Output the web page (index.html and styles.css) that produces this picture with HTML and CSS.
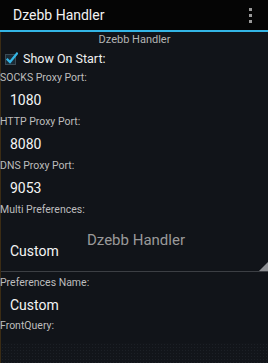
FILE: index.html
```html
<!DOCTYPE html>
<html>
<head>
<meta charset="utf-8">
<link rel="stylesheet" href="styles.css">
</head>
<body>
<div class="app">
  <header class="bar">
    <span class="title">Dzebb Handler</span>
    <span class="overflow"><i></i><i></i><i></i></span>
  </header>
  <div class="accent"></div>
  <main class="content">
    <div class="sub">Dzebb Handler</div>
    <label class="check">
      <svg class="box" width="13" height="13" viewBox="0 0 13 13">
        <rect x="0.5" y="2.5" width="10" height="10" fill="#1b2b36" stroke="#3a4a55"/>
        <path d="M2.5 7.5 L5 10 L12 1.5" fill="none" stroke="#33b5e5" stroke-width="2.2" stroke-linecap="square"/>
      </svg>
      <span>Show On Start:</span>
    </label>
    <div class="lbl">SOCKS Proxy Port:</div>
    <div class="val">1080</div>
    <div class="lbl">HTTP Proxy Port:</div>
    <div class="val">8080</div>
    <div class="lbl">DNS Proxy Port:</div>
    <div class="val">9053</div>
    <div class="lbl lbl-s">Multi Preferences:</div>
    <div class="spinner">
      <span class="spin-val">Custom</span>
      <span class="tri"></span>
    </div>
    <div class="lbl lbl-m">Preferences Name:</div>
    <div class="val val-m">Custom</div>
    <div class="lbl">FrontQuery:</div>
    <div class="gap"></div>
    <div class="dots"></div>
  </main>
  <div class="toast">Dzebb Handler</div>
</div>
</body>
</html>
```
FILE: styles.css
```css
* { box-sizing: border-box; }
html, body { margin: 0; padding: 0; }
body {
  width: 268px;
  height: 363px;
  overflow: hidden;
  background: #111419;
  font-family: Roboto, "Noto Sans", sans-serif;
  color: #fff;
}
.app { position: relative; height: 363px; display: flex; flex-direction: column; }
.bar {
  height: 30px;
  background: #050505;
  display: flex;
  align-items: center;
  justify-content: space-between;
  padding: 0 16px 0 13px;
}
.title { font-size: 14px; color: #f2f2f2; }
.overflow { display: flex; flex-direction: column; gap: 3px; }
.overflow i { display: block; width: 3px; height: 3px; background: #9a9a9a; }
.accent { height: 2px; background: #33b5e5; }
.content {
  flex: 1;
  display: flex;
  flex-direction: column;
  border-left: 1px solid #3b2c14;
}
.sub {
  height: 16px;
  line-height: 16px;
  text-align: center;
  font-size: 11px;
  color: #b4b4b4;
}
.check {
  height: 20px;
  display: flex;
  align-items: center;
  gap: 5px;
  padding-left: 4px;
  font-size: 12.5px;
  color: #f0f0f0;
}
.box { display: block; }
.lbl {
  height: 20px;
  line-height: 20px;
  font-size: 10.5px;
  color: #bdbdbd;
  margin-left: -1px;
}
.lbl-s { height: 19px; line-height: 19px; }
.lbl-m { height: 22px; line-height: 22px; }
.val {
  height: 24px;
  line-height: 24px;
  padding-left: 9px;
  font-size: 14px;
  color: #f4f4f4;
}
.val-m { height: 22px; line-height: 22px; }
.spinner {
  position: relative;
  height: 53px;
  display: flex;
  align-items: center;
  padding: 12px 0 0 9px;
  border-bottom: 1px solid #3c3f44;
  font-size: 14px;
  color: #f4f4f4;
}
.tri {
  position: absolute;
  right: 0;
  bottom: 0;
  width: 0; height: 0;
  border-left: 9px solid transparent;
  border-bottom: 9px solid #8d8f93;
}
.gap { height: 7px; }
.dots {
  flex: 1;
  background-color: #12151a;
  background-image: radial-gradient(circle, #1c2026 0.8px, transparent 1px);
  background-size: 3px 3px;
}
.toast {
  position: absolute;
  left: 87px;
  top: 231px;
  font-size: 15px;
  color: #9a9a9a;
}
```
